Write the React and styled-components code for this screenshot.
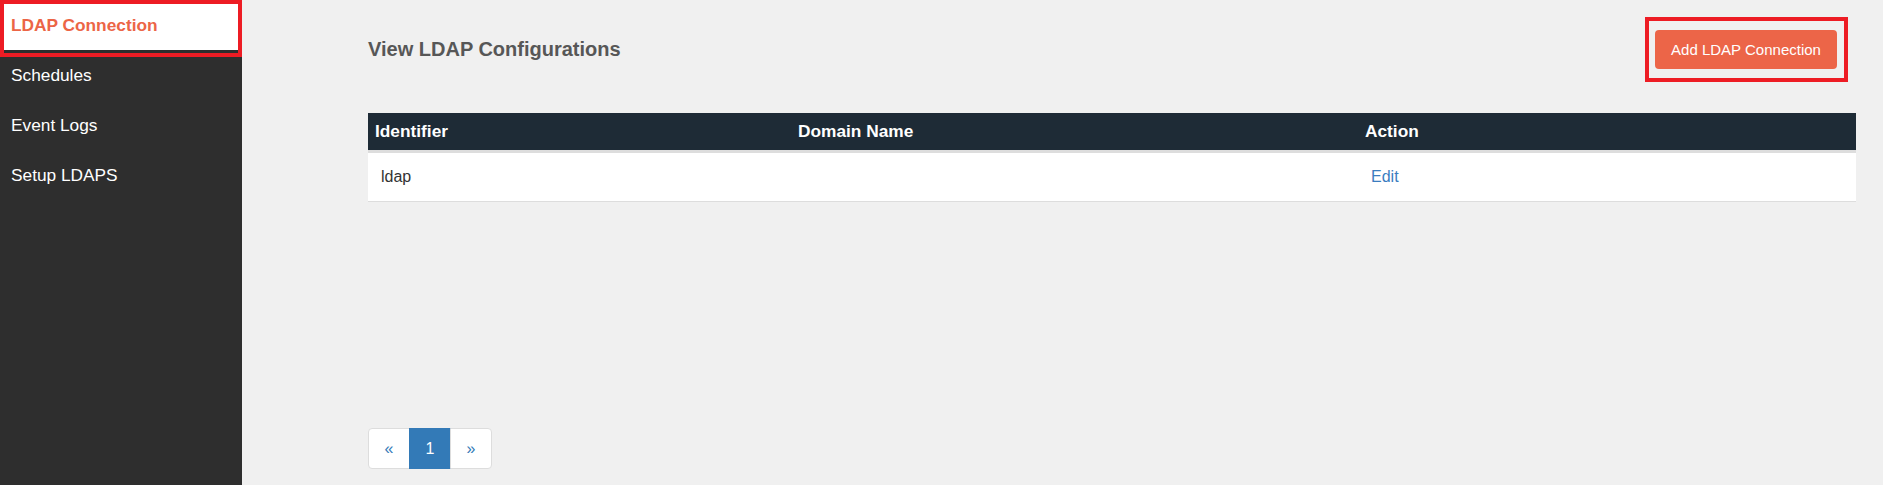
import React from "react";
import styled, { createGlobalStyle } from "styled-components";

const GlobalStyle = createGlobalStyle`
  html, body { margin: 0; padding: 0; background: #f0f0f0; }
  body { font-family: "Liberation Sans", Arial, sans-serif; color: #333; }
  * { box-sizing: border-box; }
`;

const Page = styled.div`
  display: flex;
  width: 1883px;
  height: 485px;
  background: #f0f0f0;
  overflow: hidden;
`;

const Sidebar = styled.nav`
  width: 242px;
  flex: none;
  background: #2e2e2e;
  display: flex;
  flex-direction: column;
`;

const NavItem = styled.a`
  position: relative;
  display: flex;
  align-items: center;
  height: 50px;
  padding-left: 11px;
  font-size: 17.3px;
  text-decoration: none;
  font-weight: ${(p) => (p.$active ? 700 : 400)};
  color: ${(p) => (p.$active ? "#ec6546" : "#ffffff")};
  background: ${(p) => (p.$active ? "#ffffff" : "transparent")};
`;

const Highlight = styled.span`
  position: absolute;
  top: ${(p) => p.$top}px;
  left: ${(p) => p.$left}px;
  right: ${(p) => p.$right}px;
  bottom: ${(p) => p.$bottom}px;
  border: 4px solid #ed1c24;
  pointer-events: none;
`;

const Main = styled.main`
  flex: 1;
  display: flex;
  flex-direction: column;
  padding: 30px 27px 16px 126px;
`;

const HeaderRow = styled.div`
  display: flex;
  align-items: center;
  justify-content: space-between;
  padding-right: 19px;
  height: 39px;
`;

const Title = styled.h2`
  margin: 0;
  font-size: 20px;
  font-weight: 700;
  color: #575757;
`;

const ButtonWrap = styled.div`
  position: relative;
`;

const PrimaryButton = styled.button`
  display: block;
  width: 182px;
  height: 39px;
  border: none;
  border-radius: 4px;
  background: #ec6548;
  color: #fff;
  font-family: "Liberation Sans", Arial, sans-serif;
  font-size: 15px;
  padding: 0;
`;

const Table = styled.div`
  margin-top: 44px;
  width: 1488px;
  background: #fff;
`;

const Row = styled.div`
  display: grid;
  grid-template-columns: 423px 567px 1fr;
  align-items: center;
`;

const HeadRow = styled(Row)`
  height: 40px;
  background: #1e2b36;
  border-bottom: 3px solid #dddddd;
`;

const BodyRow = styled(Row)`
  height: 49px;
  border-bottom: 1px solid #dddddd;
`;

const HeadCell = styled.div`
  padding-left: 7px;
  font-size: 17.3px;
  font-weight: 700;
  color: #fff;
`;

const Cell = styled.div`
  padding-left: 13px;
  font-size: 16px;
  color: ${(p) => (p.$link ? "#3a7dbf" : "#333")};
`;

const Pagination = styled.ul`
  margin: auto 0 0 0;
  padding: 0;
  list-style: none;
  display: flex;
`;

const PageItem = styled.li`
  width: 42px;
  height: 41px;
  display: flex;
  align-items: center;
  justify-content: center;
  margin-left: -1px;
  font-size: 16px;
  border: 1px solid ${(p) => (p.$active ? "#337ab7" : "#dddddd")};
  background: ${(p) => (p.$active ? "#337ab7" : "#ffffff")};
  color: ${(p) => (p.$active ? "#ffffff" : "#337ab7")};
  &:first-child {
    margin-left: 0;
    border-radius: 4px 0 0 4px;
  }
  &:last-child {
    border-radius: 0 4px 4px 0;
  }
`;

const navItems = ["LDAP Connection", "Schedules", "Event Logs", "Setup LDAPS"];

export default function App() {
  return (
    <>
      <GlobalStyle />
      <Page>
        <Sidebar>
          {navItems.map((label, i) => (
            <NavItem key={label} href="#" $active={i === 0}>
              {label}
              {i === 0 && <Highlight $top={0} $left={0} $right={0} $bottom={-7} />}
            </NavItem>
          ))}
        </Sidebar>
        <Main>
          <HeaderRow>
            <Title>View LDAP Configurations</Title>
            <ButtonWrap>
              <PrimaryButton>Add LDAP Connection</PrimaryButton>
              <Highlight $top={-13} $left={-10} $right={-11} $bottom={-13} />
            </ButtonWrap>
          </HeaderRow>
          <Table>
            <HeadRow>
              <HeadCell>Identifier</HeadCell>
              <HeadCell>Domain Name</HeadCell>
              <HeadCell>Action</HeadCell>
            </HeadRow>
            <BodyRow>
              <Cell>ldap</Cell>
              <Cell></Cell>
              <Cell $link>Edit</Cell>
            </BodyRow>
          </Table>
          <Pagination>
            <PageItem>«</PageItem>
            <PageItem $active>1</PageItem>
            <PageItem>»</PageItem>
          </Pagination>
        </Main>
      </Page>
    </>
  );
}
